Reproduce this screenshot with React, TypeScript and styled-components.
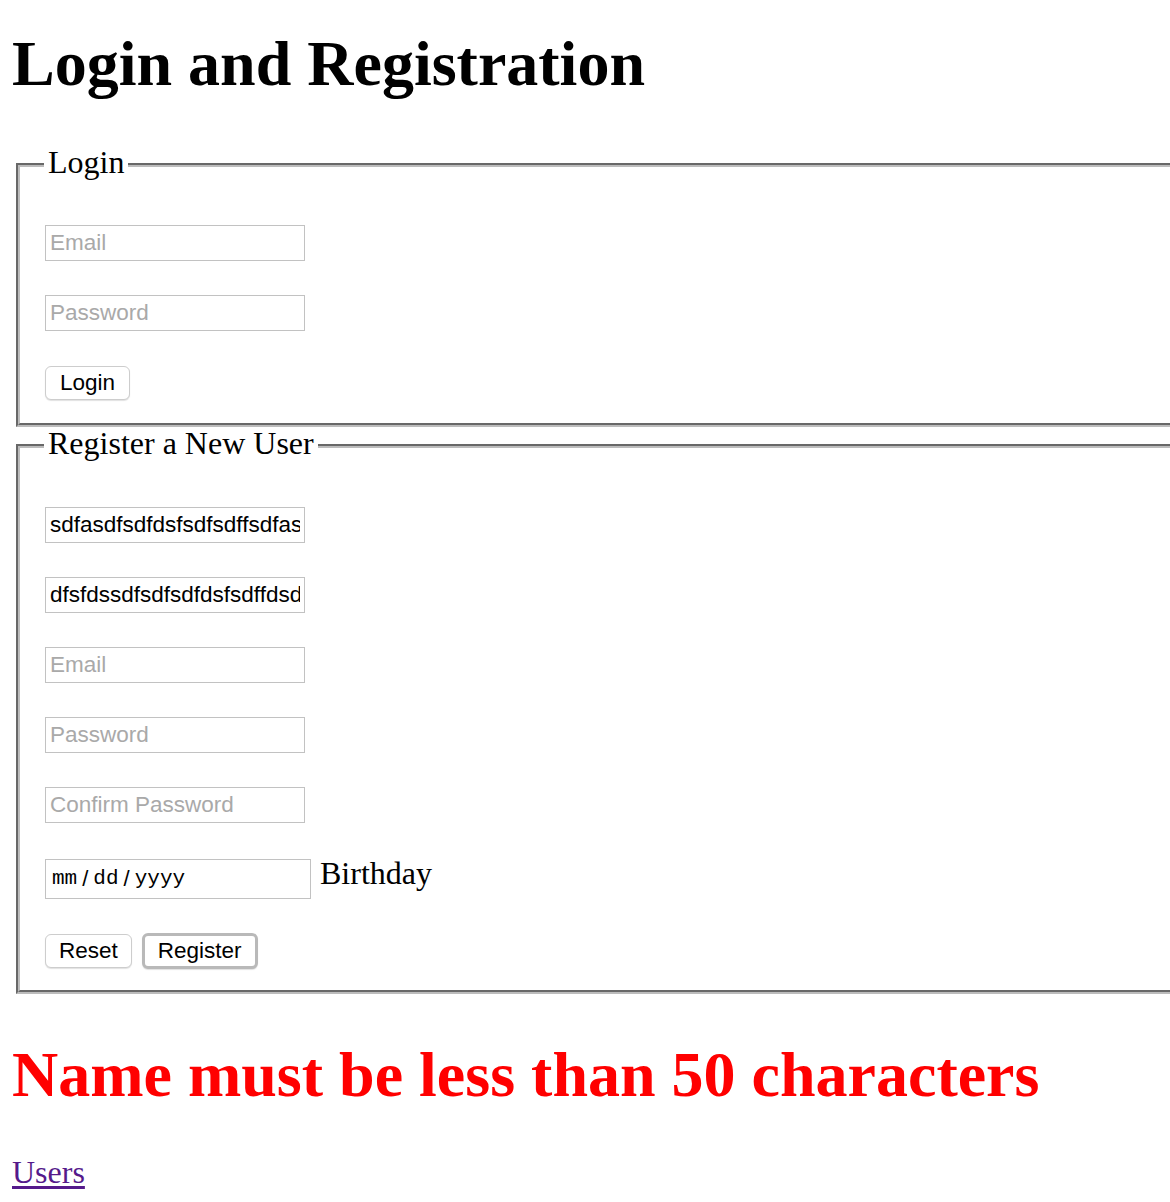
import React from "react";
import styled, { createGlobalStyle } from "styled-components";

const Global = createGlobalStyle`
  html, body { margin: 0; padding: 0; background: #fff; }
  body { font-family: "Liberation Serif", "Times New Roman", serif; color: #000; }
`;

const Page = styled.div`
  padding: 0 0 8px 12px;
  overflow-x: hidden;
`;

const Title = styled.h1<{ $error?: boolean }>`
  margin: 0;
  margin-top: ${(p) => (p.$error ? "49px" : "32px")};
  font-size: 64px;
  line-height: 64px;
  font-weight: bold;
  color: ${(p) => (p.$error ? "#ff0000" : "#000")};
  white-space: nowrap;
`;

const Fieldset = styled.fieldset<{ $top: number }>`
  margin: ${(p) => p.$top}px -60px 0 4px;
  padding: 0;
  border: 4px groove #bcbcbc;
  min-width: 0;
`;

const Legend = styled.legend`
  margin-left: 24px;
  padding: 0 4px 6px;
  font-size: 32px;
  line-height: 32px;
`;

const Body = styled.div<{ $top: number; $bottom: number }>`
  display: flex;
  flex-direction: column;
  align-items: flex-start;
  gap: 34px;
  padding: ${(p) => p.$top}px 0 ${(p) => p.$bottom}px 25px;
`;

const TextInput = styled.input`
  box-sizing: border-box;
  width: 260px;
  height: 36px;
  margin: 0;
  padding: 0 4px;
  border: 1px solid #c2c2c2;
  border-radius: 0;
  background: #fff;
  font-family: "Liberation Sans", Arial, sans-serif;
  font-size: 22.5px;
  color: #000;
  outline: none;
  &::placeholder { color: #a9a9a9; }
`;

const Row = styled.div`
  display: flex;
  align-items: baseline;
  gap: 9px;
`;

const DateField = styled.div`
  box-sizing: border-box;
  width: 266px;
  height: 40px;
  border: 1px solid #c2c2c2;
  padding: 0 6px;
  display: flex;
  align-items: center;
  font-family: "Liberation Mono", "Courier New", monospace;
  font-size: 21px;
  color: #000;
`;

const Segment = styled.span``;

const Slash = styled.span`
  font-family: "Liberation Sans", Arial, sans-serif;
  font-size: 22px;
  margin: 0 5px;
`;

const Label = styled.span`
  font-size: 32px;
  line-height: 32px;
`;

const Buttons = styled.div`
  display: flex;
  align-items: center;
  gap: 10px;
`;

const Button = styled.button<{ $focused?: boolean }>`
  box-sizing: border-box;
  height: ${(p) => (p.$focused ? "36px" : "34px")};
  margin: 0;
  padding: 0 13px;
  border: ${(p) => (p.$focused ? "3px solid #b9b9b9" : "1px solid #cdcdcd")};
  border-radius: 6px;
  background: #fff;
  box-shadow: 0 1px 1px rgba(0, 0, 0, 0.12);
  font-family: "Liberation Sans", Arial, sans-serif;
  font-size: 22.5px;
  color: #000;
  cursor: pointer;
`;

const LoginButton = styled(Button)`
  margin-top: 1px;
  padding: 0 14px;
`;

const Users = styled.a`
  display: inline-block;
  margin-top: 49px;
  font-size: 32px;
  line-height: 32px;
  color: #551a8b;
  text-decoration: underline;
  text-underline-offset: 3px;
`;

export default function App() {
  return (
    <>
      <Global />
      <Page>
        <Title>Login and Registration</Title>

        <Fieldset $top={50}>
          <Legend>Login</Legend>
          <Body $top={41} $bottom={23}>
            <TextInput type="text" placeholder="Email" />
            <TextInput type="password" placeholder="Password" />
            <LoginButton>Login</LoginButton>
          </Body>
        </Fieldset>

        <Fieldset $top={0}>
          <Legend>Register a New User</Legend>
          <Body $top={42} $bottom={21}>
            <TextInput type="text" defaultValue="sdfasdfsdfdsfsdfsdffsdfasdfasdf" />
            <TextInput type="text" defaultValue="dfsfdssdfsdfsdfdsfsdffdsdfsdf" />
            <TextInput type="text" placeholder="Email" />
            <TextInput type="password" placeholder="Password" />
            <TextInput type="password" placeholder="Confirm Password" />
            <Row>
              <DateField>
                <Segment>mm</Segment>
                <Slash>/</Slash>
                <Segment>dd</Segment>
                <Slash>/</Slash>
                <Segment>yyyy</Segment>
              </DateField>
              <Label>Birthday</Label>
            </Row>
            <Buttons>
              <Button>Reset</Button>
              <Button $focused>Register</Button>
            </Buttons>
          </Body>
        </Fieldset>

        <Title $error>Name must be less than 50 characters</Title>
        <Users href="#">Users</Users>
      </Page>
    </>
  );
}
